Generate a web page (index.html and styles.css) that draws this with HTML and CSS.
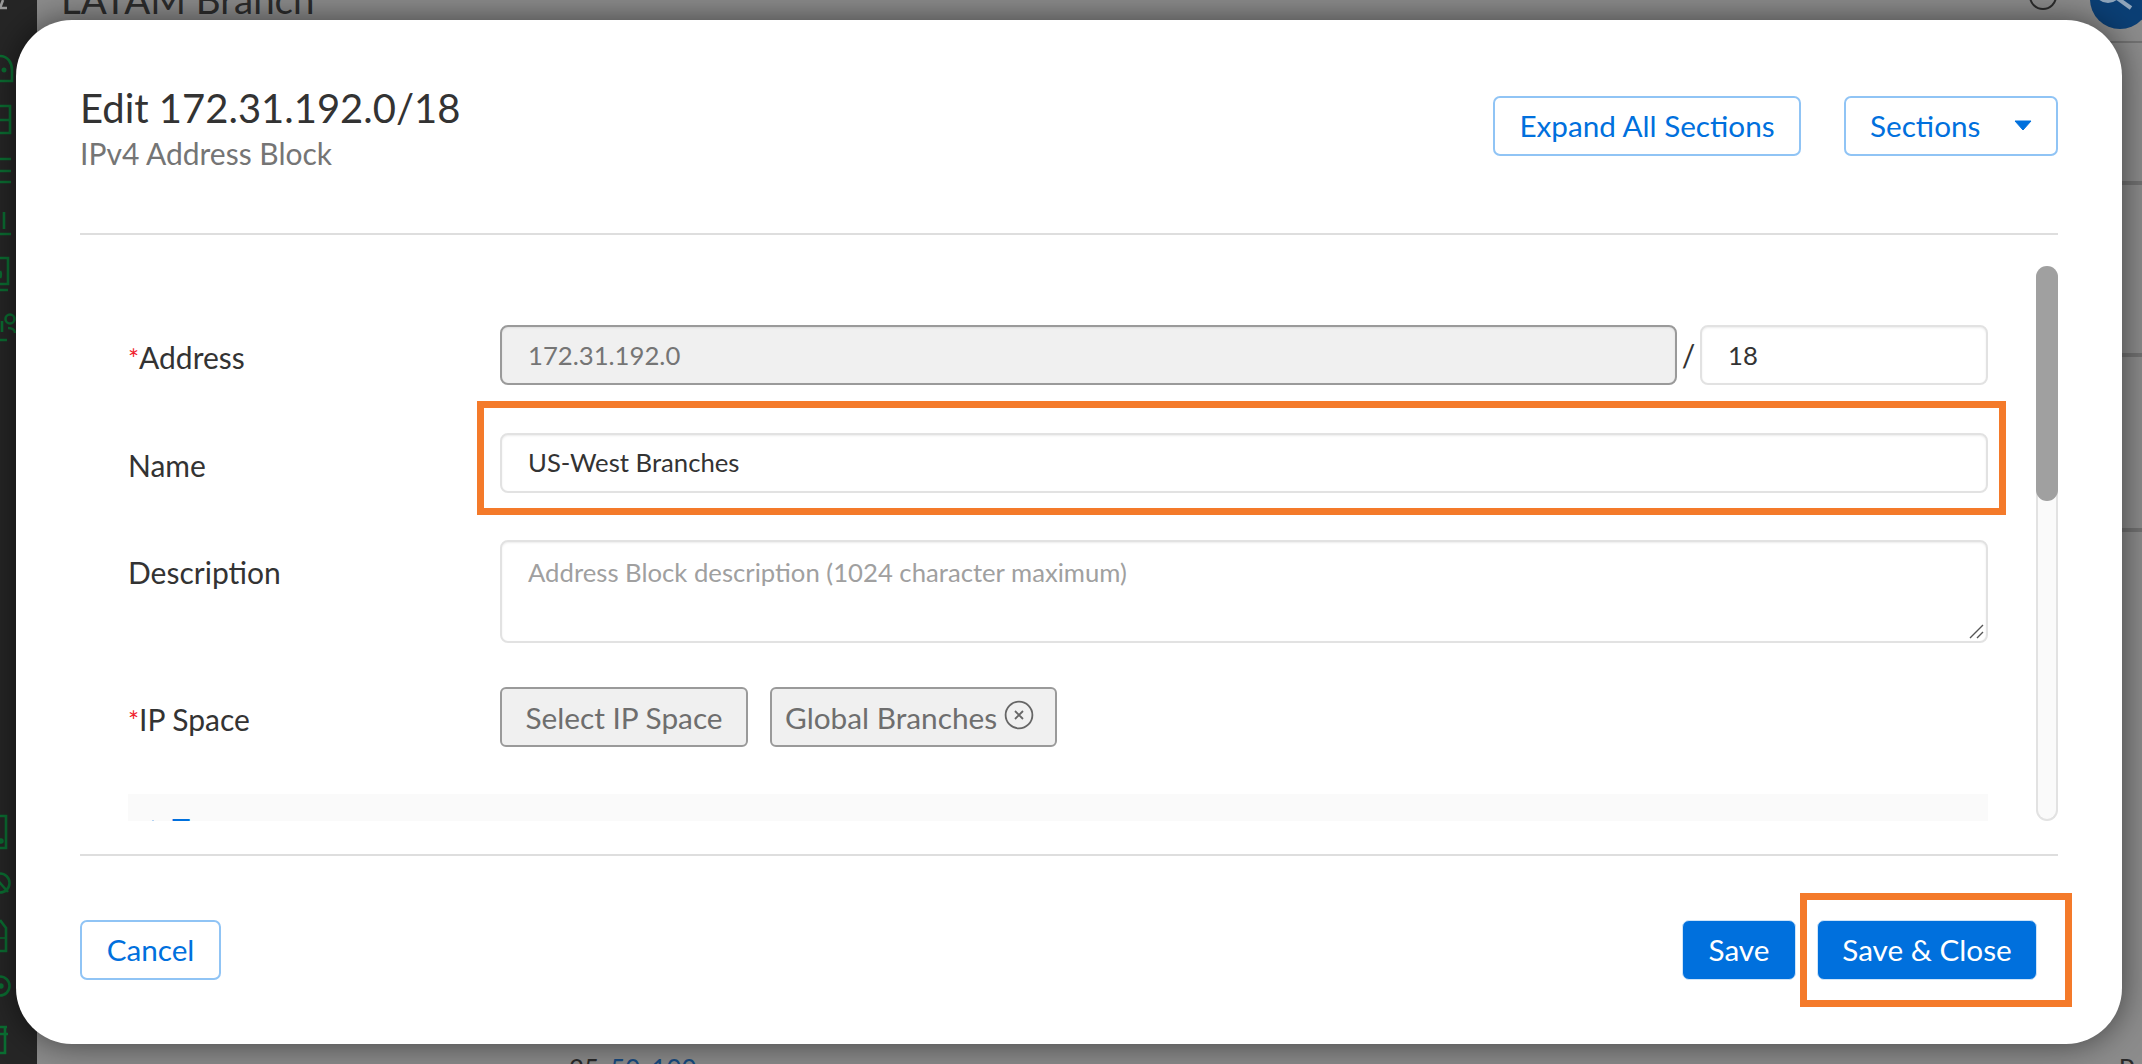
FILE: index.html
```html
<!DOCTYPE html>
<html lang="en">
<head>
<meta charset="utf-8">
<title>Edit 172.31.192.0/18</title>
<link rel="stylesheet" href="styles.css">
</head>
<body>
<div class="page">
  <aside class="sidebar">
    <svg class="side-icons" width="37" height="1064" viewBox="0 0 37 1064" fill="none" stroke="#0b6e32" stroke-width="2.6">
      <path d="M0 8 L3 0 M7 8 H0" stroke="#9a9a9a"/>
      <path d="M0 56 C8 56 12 63 12 70 V81 H0"/><circle cx="4" cy="70" r="1.2"/>
      <path d="M0 106 H10 V133 H0 M0 120 H10"/>
      <path d="M0 159 H11 M0 171 H11 M0 182 H11"/>
      <path d="M4 212 V229 M0 234 H11"/>
      <path d="M0 258 H8 V284 H0 M0 290 H8 M0 271 A4 6 0 0 1 0 278"/>
      <path d="M0 340 H7 M2 321 V332"/><circle cx="10" cy="319" r="4.5"/><path d="M8 328 C12 328 15 330 15 333"/>
      <path d="M0 816 H6 V848 H0"/><circle cx="1" cy="841" r="1.5"/>
      <circle cx="0" cy="883" r="9.5"/><path d="M-6 876 L8 892"/>
      <path d="M0 920 L6 928 V951 H0"/><path d="M0 938 H6" stroke-width="1.6"/>
      <circle cx="0" cy="986" r="9.5"/><circle cx="1" cy="986" r="1.4"/>
      <path d="M0 1027 H7 M5 1027 V1053 H0 M0 1034 H8"/>
    </svg>
  </aside>
  <main class="behind">
    <h1 class="behind-title">LATAM Branch</h1>
    <div class="behind-row row-a"></div>
    <div class="behind-row row-b"></div>
    <div class="behind-row row-c"></div>
    <div class="behind-row row-d"></div>
    <div class="pager">
      <span class="pager-sizes"><span>25</span><a>50</a><a>100</a></span>
      <span class="pager-end">Page</span>
    </div>
    <span class="ring"></span>
    <span class="search">
      <svg width="60" height="60" viewBox="0 0 60 60" fill="none" stroke="#8fa5bb" stroke-width="4"><circle cx="18" cy="20" r="12"/><path d="M27 29 L41 39"/></svg>
    </span>
  </main>

  <section class="modal">
    <header class="modal-head">
      <div class="titles">
        <h2 class="modal-title">Edit 172.31.192.0/18</h2>
        <p class="modal-sub">IPv4 Address Block</p>
      </div>
      <div class="head-actions">
        <button class="btn btn-outline btn-expand">Expand All Sections</button>
        <button class="btn btn-outline btn-sections">Sections
          <svg class="caret" width="18" height="11" viewBox="0 0 18 11"><path d="M1 1 H17 L9 10 Z" fill="#0070dd" stroke="#0070dd" stroke-linejoin="round"/></svg>
        </button>
      </div>
    </header>

    <div class="modal-body">
      <form class="form">
        <div class="row row-address">
          <label class="label"><span class="req">*</span>Address</label>
          <div class="control split">
            <div class="field field-disabled grow">172.31.192.0</div>
            <span class="slash">/</span>
            <div class="field field-prefix">18</div>
          </div>
        </div>
        <div class="row row-name">
          <label class="label">Name</label>
          <div class="control"><div class="field field-name">US-West Branches</div></div>
        </div>
        <div class="row row-desc">
          <label class="label">Description</label>
          <div class="control">
            <div class="field field-area">Address Block description (1024 character maximum)
              <svg class="resizer" width="16" height="16" viewBox="0 0 16 16" stroke="#555" stroke-width="1.4"><path d="M2 15 L15 2 M9 15 L15 9"/></svg>
            </div>
          </div>
        </div>
        <div class="row row-space">
          <label class="label"><span class="req">*</span>IP Space</label>
          <div class="control chips">
            <span class="chip chip-select">Select IP Space</span>
            <span class="chip chip-value">Global Branches
              <svg class="chip-x" width="30" height="30" viewBox="0 0 30 30" fill="none" stroke="#666" stroke-width="1.8"><circle cx="15" cy="15" r="13.4"/><path d="M11 11 L19 19 M19 11 L11 19"/></svg>
            </span>
          </div>
        </div>
        <div class="section-bar">
          <span class="section-caret"></span><span class="section-name">Tags</span>
        </div>
      </form>
      <div class="scrolltrack"><div class="scrollthumb"></div></div>
    </div>

    <footer class="modal-foot">
      <button class="btn btn-outline btn-cancel">Cancel</button>
      <div class="foot-right">
        <button class="btn btn-solid btn-save">Save</button>
        <button class="btn btn-solid btn-close">Save &amp; Close</button>
      </div>
    </footer>

    <div class="mark mark-name"></div>
    <div class="mark mark-close"></div>
  </section>
</div>
</body>
</html>
```

FILE: styles.css
```css
* { box-sizing: border-box; }
html, body { margin: 0; padding: 0; height: 100%; }
body { font-family: Lato, "Liberation Sans", sans-serif; color: #333; overflow: hidden; }

.page { position: relative; display: flex; width: 2142px; height: 1064px; overflow: hidden; background: #8c8c8c; }

/* behind the dialog */
.sidebar { flex: 0 0 37px; background: #262626; }
.side-icons { display: block; }
.behind { position: relative; flex: 1; min-width: 0; overflow: hidden; }
.behind-title { margin: -34px 0 0 24px; height: 75px; font-size: 38.5px; line-height: 66px; font-weight: 400; color: #2c2c2c; white-space: nowrap; }
.behind-row { border-bottom: 4px solid rgba(0,0,0,.18); }
.row-a { height: 2px; border-bottom-width: 2px; }
.row-b { height: 142px; }
.row-c { height: 172px; }
.row-d { height: 175px; }
.pager { display: flex; justify-content: space-between; margin-top: 522px; padding: 0 0 0 532px; font-size: 26px; line-height: 30px; color: #2a2a2a; white-space: nowrap; }
.pager-sizes { display: flex; gap: 11px; }
.pager-sizes a { color: #174a80; }
.pager-end { margin-right: -32px; }
.ring { position: absolute; left: 1992px; top: -18px; width: 28px; height: 28px; border: 2px solid #2c2c2c; border-radius: 50%; }
.search { position: absolute; left: 2053px; top: -31px; width: 60px; height: 60px; border-radius: 50%; background: #0b3f75; }
.search svg { display: block; }

/* dialog */
.modal { position: absolute; left: 16px; top: 20px; width: 2106px; height: 1024px; padding: 0 64px; background: #fff; border-radius: 56px; box-shadow: 0 0 34px rgba(0,0,0,.55); }
.modal-head { display: flex; justify-content: space-between; height: 215px; padding-top: 76px; border-bottom: 2px solid #dedede; }
.modal-title { margin: -11px 0 0 0; font-size: 40px; line-height: 46px; font-weight: 400; color: #333; }
.modal-sub { margin: 4px 0 0 0; font-size: 30px; line-height: 36px; color: #757575; }
.head-actions { display: flex; gap: 43px; align-items: flex-start; }

.btn { display: inline-flex; align-items: center; justify-content: center; height: 60px; padding: 0; border-radius: 7px; font: 400 29.7px/1 Lato, "Liberation Sans", sans-serif; cursor: pointer; }
.btn-outline { background: #fff; color: #0070dd; border: 2px solid #90c4f5; }
.btn-solid { background: #0070dd; color: #fff; border: 1px solid #cfe4f8; }
.btn-expand { width: 308px; }
.btn-sections { width: 214px; justify-content: space-between; padding: 0 24px 0 24px; }
.caret { margin-top: -2px; }
.btn-cancel { width: 141px; }
.btn-save { width: 114px; }
.btn-close { width: 220px; }

.modal-body { display: flex; gap: 48px; height: 586px; overflow: hidden; }
.form { width: 1860px; margin-left: 48px; padding-top: 90px; }
.row { display: flex; align-items: center; }
.row-name { margin-top: 48px; }
.row-desc { margin-top: 47px; align-items: flex-start; }
.row-space { margin-top: 44px; }
.row-address .label { padding-top: 6px; }
.row-name .label { padding-top: 4px; }
.row-desc .label { padding-top: 14px; }
.row-space .label { padding-top: 5px; }
.label { flex: 0 0 372px; font-size: 30px; line-height: 36px; color: #333; }
.req { color: #f01c2c; font-size: 26px; }
.control { flex: 1; min-width: 0; }
.split { display: flex; align-items: center; }
.grow { flex: 1; }
.field { display: flex; align-items: center; height: 60px; padding: 0 26px; background: #fff; border: 2px solid #e2e2e2; border-radius: 8px; box-shadow: inset 0 1px 2px rgba(0,0,0,.08); font-size: 25.7px; color: #333; }
.field-name { padding-bottom: 2px; }
.field-disabled { background: #f0f0f0; border-color: #9a9a9a; color: #757575; }
.slash { width: 23px; text-align: center; font-size: 30px; color: #333; }
.field-prefix { flex: 0 0 288px; }
.field-area { position: relative; height: 103px; padding-top: 15px; align-items: flex-start; color: #a0a0a0; }
.resizer { position: absolute; right: 2px; bottom: 2px; }
.chips { display: flex; gap: 22px; }
.chip { display: inline-flex; align-items: center; height: 60px; background: #f0f0f0; border: 2px solid #9a9a9a; border-radius: 6px; font-size: 29.8px; color: #6e6e6e; white-space: nowrap; }
.chip-select { width: 248px; justify-content: center; }
.chip-value { width: 287px; padding-left: 13px; gap: 8px; }
.chip-x { margin-top: -4px; margin-left: -1px; }

.section-bar { display: flex; align-items: flex-start; gap: 12px; height: 70px; margin-top: 47px; padding: 17px 0 0 18px; background: #fafafa; color: #0070dd; font-size: 30px; line-height: 36px; font-weight: 700; }
.section-caret { width: 0; height: 0; margin-top: 9px; border-left: 7px solid transparent; border-right: 7px solid transparent; border-bottom: 12px solid #0070dd; }

.scrolltrack { flex: 0 0 22px; height: 555px; margin-top: 31px; background: #fafafa; border: 2px solid #e2e2e2; border-top: 0; border-radius: 11px; }
.scrollthumb { height: 235px; margin: 0 -2px; background: #a0a0a0; border-radius: 11px; }

.modal-foot { display: flex; justify-content: space-between; margin-top: 33px; padding-top: 64px; border-top: 2px solid #dedede; }
.foot-right { display: flex; gap: 21px; margin-right: 21px; }

/* annotation boxes drawn over the dialog */
.mark { position: absolute; border: 7px solid #f47a2a; height: 114px; }
.mark-name { left: 461px; top: 381px; width: 1529px; }
.mark-close { left: 1784px; top: 873px; width: 272px; }
```
